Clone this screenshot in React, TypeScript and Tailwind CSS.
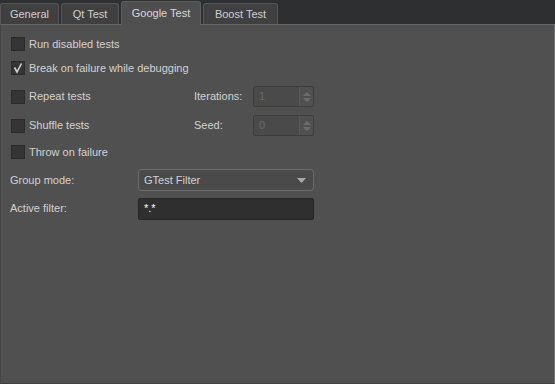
import React from 'react';

const font = { fontFamily: '"Liberation Sans", Arial, sans-serif' };

function Tab({ label, active, w }: { label: string; active?: boolean; w: string }) {
  if (active) {
    return (
      <div className={`${w} h-[24px] mt-[1px] flex items-center justify-center rounded-t-[3px] border border-b-0 border-[#5e5e5e] bg-[#4f4f4f] text-[#d8d8d8] -mb-[1px] z-10`}>
        {label}
      </div>
    );
  }
  return (
    <div className={`${w} h-[21px] mt-[3px] flex items-center justify-center rounded-t-[3px] border border-b-0 border-[#555] bg-[#404040] text-[#cfcfcf]`}>
      {label}
    </div>
  );
}

function Check({ label, checked }: { label: string; checked?: boolean }) {
  return (
    <div className="flex items-center h-[24px]">
      <div className="w-[14px] h-[14px] ml-[10px] mr-[4px] bg-[#353535] border border-[#2b2b2b] flex items-center justify-center">
        {checked && (
          <svg width="12" height="12" viewBox="0 0 12 12">
            <path d="M2.5 5.5 L5 10 L9.5 1.5" fill="none" stroke="#d0d0d0" strokeWidth="1.6" />
          </svg>
        )}
      </div>
      <span>{label}</span>
    </div>
  );
}

function Spin({ value }: { value: string }) {
  return (
    <div className="w-[61px] h-[21px] flex rounded-[2px] border border-[#3d3d3d] bg-[#4a4a4a]">
      <div className="flex-1 pl-[5px] text-[#6a6a6a] leading-[19px]">{value}</div>
      <div className="w-[14px] flex flex-col items-center justify-center gap-[2px] bg-[#505050] border-l border-[#5a5a5a] rounded-r-[2px]">
        <svg width="8" height="4" viewBox="0 0 8 4"><path d="M0 4 L4 0 L8 4Z" fill="#6c6c6c" /></svg>
        <svg width="8" height="4" viewBox="0 0 8 4"><path d="M0 0 L4 4 L8 0Z" fill="#6c6c6c" /></svg>
      </div>
    </div>
  );
}

export default function App() {
  return (
    <div className="w-[555px] h-[384px] bg-[#2e2f30] flex flex-col text-[11px] text-[#d2d2d2] overflow-hidden" style={font}>
      <div className="flex items-start h-[24px] gap-[2px]">
        <Tab label="General" w="w-[59px]" />
        <Tab label="Qt Test" w="w-[58px]" />
        <Tab label="Google Test" w="w-[80px]" active />
        <Tab label="Boost Test" w="w-[75px]" />
      </div>
      <div className="flex-1 bg-[#505050] border-t border-[#656565] border-r border-r-[#707070] border-b border-b-[#404040] border-l border-l-[#454545] pt-[7px]">
        <Check label="Run disabled tests" />
        <Check label="Break on failure while debugging" checked />
        <div className="flex items-center h-[29px] mt-[2px]">
          <div className="w-[193px]"><Check label="Repeat tests" /></div>
          <span className="w-[59px]">Iterations:</span>
          <Spin value="1" />
        </div>
        <div className="flex items-center h-[29px]">
          <div className="w-[193px]"><Check label="Shuffle tests" /></div>
          <span className="w-[59px]">Seed:</span>
          <Spin value="0" />
        </div>
        <Check label="Throw on failure" />
        <div className="flex items-center h-[30px] mt-[1px]">
          <span className="w-[137px] pl-[9px]">Group mode:</span>
          <div className="w-[176px] h-[22px] flex items-center justify-between px-[5px] rounded-[3px] border border-[#6a6a6a] bg-[#4a4a4a]">
            <span>GTest Filter</span>
            <svg width="9" height="5" viewBox="0 0 9 5" className="mr-[2px]"><path d="M0 0 L9 0 L4.5 5Z" fill="#a8a8a8" /></svg>
          </div>
        </div>
        <div className="flex items-center h-[27px]">
          <span className="w-[137px] pl-[9px]">Active filter:</span>
          <div className="w-[176px] h-[22px] flex items-center px-[5px] rounded-[2px] border border-[#262626] bg-[#2f2f30] text-white">
            *.*
          </div>
        </div>
      </div>
    </div>
  );
}
